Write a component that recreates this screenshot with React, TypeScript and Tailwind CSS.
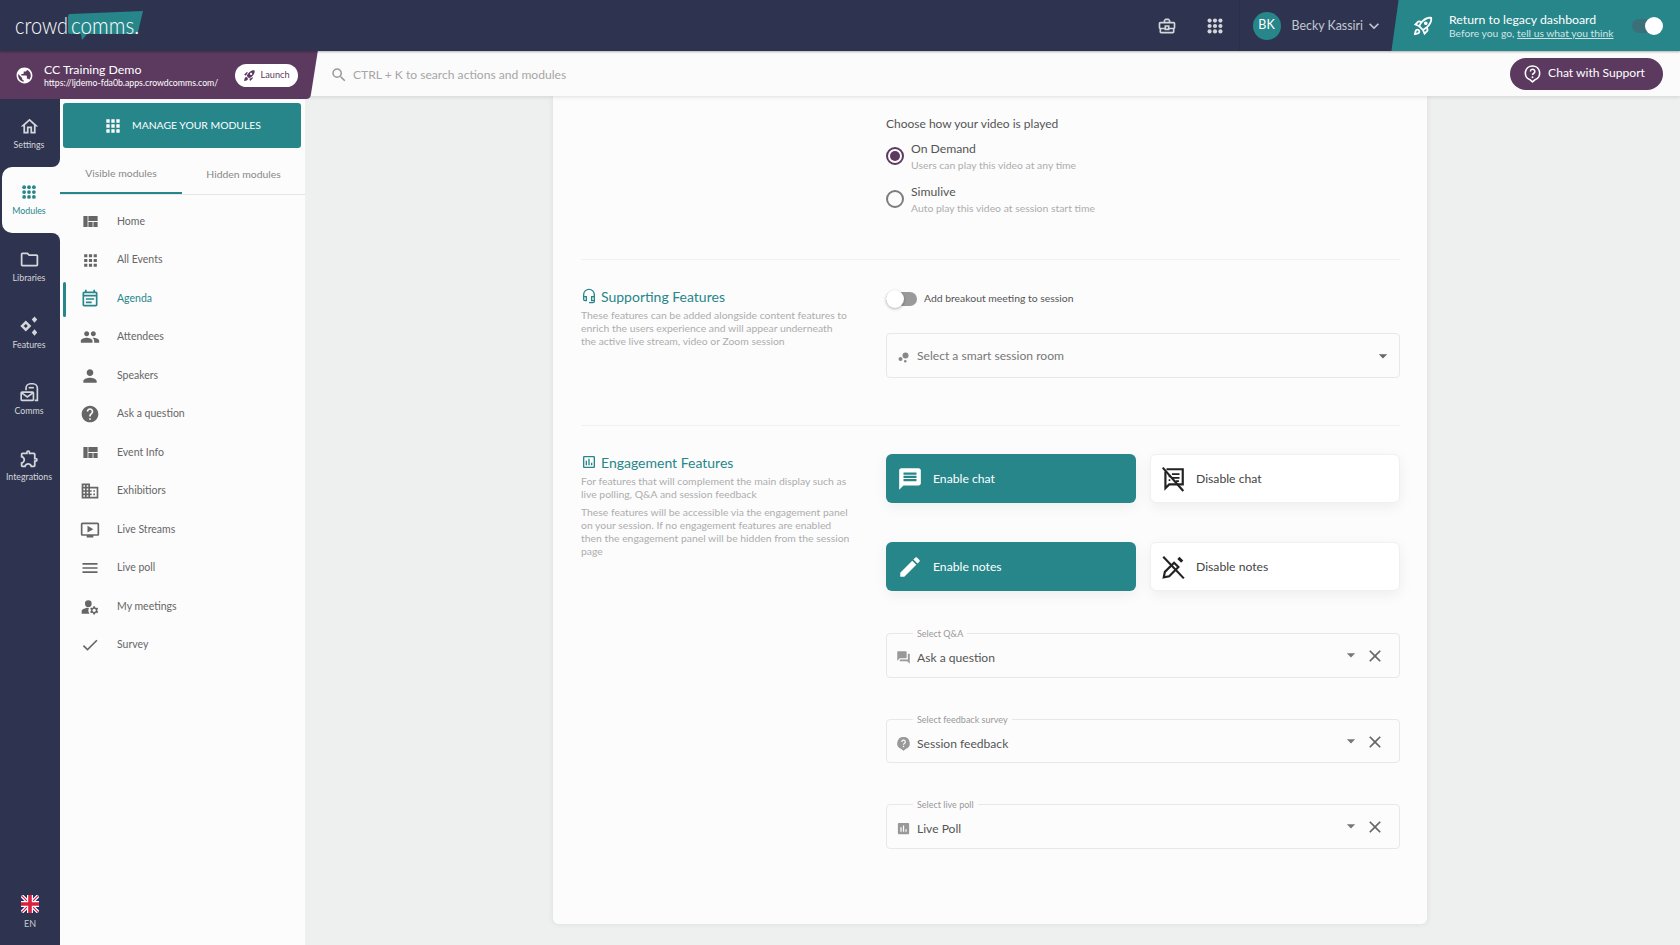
import React from "react";
import {
  MdOutlineHome, MdApps, MdOutlineFolder, MdOutlineExtension, MdViewQuilt, MdOutlineEventNote, MdPeople, MdPerson, MdHelp,
  MdOutlineDomain, MdOutlineOndemandVideo, MdMenu, MdManageAccounts, MdCheck, MdOutlineRocketLaunch, MdRocketLaunch, MdPublic, MdOutlineBusinessCenter,
  MdKeyboardArrowDown, MdSearch, MdOutlineHeadsetMic, MdOutlineAssessment, MdMessage, MdEdit,
  MdBubbleChart, MdForum, MdAssessment, MdClose, MdArrowDropDown,
} from "react-icons/md";

type IconT = React.ComponentType<{ size?: number; className?: string }>;

function DotGrid({ size = 20, className }: { size?: number; className?: string }) {
  const pos = [5.500, 12, 18.500];
  return (
    <svg width={size} height={size} viewBox="0 0 24 24" fill="currentColor" className={className}>
      {pos.map((y) => pos.map((x) => <circle key={`${x}-${y}`} cx={x} cy={y} r="2.500" />))}
    </svg>
  );
}

function Sparkles({ size = 21, className }: { size?: number; className?: string }) {
  return (
    <svg width={size} height={size} viewBox="0 0 24 24" fill="currentColor" fillRule="evenodd" className={className}>
      <path d="M8.500 6l6 6-6 6-6-6zM8.500 9.800L6.300 12l2.200 2.200 2.200-2.200z" />
      <path d="M18 1.500l3 3.500-3 3.500-3-3.500zM18 15.500l3 3.500-3 3.500-3-3.500z" />
    </svg>
  );
}

function CommsIcon({ size = 21, className }: { size?: number; className?: string }) {
  return (
    <svg width={size} height={size} viewBox="0 0 24 24" fill="none" stroke="currentColor" strokeWidth="1.900" className={className}>
      <path d="M8 9.500V7a5 5 0 0 1 5-5h3a5 5 0 0 1 5 5v14h-3" />
      <path d="M11 6.500h6" />
      <rect x="2.500" y="11.500" width="14" height="9.500" rx="1" />
      <path d="M3 12.500l6.500 4.500 6.500-4.500" />
    </svg>
  );
}

function HelpBubble({ size = 19, filled, className }: { size?: number; filled?: boolean; className?: string }) {
  return (
    <svg width={size} height={size} viewBox="0 0 24 24" fill="none" className={className}>
      <path
        d="M12 2.500a9 9 0 0 1 3 17.500l-3 2.500-3-2.500A9 9 0 0 1 12 2.500z"
        fill={filled ? "currentColor" : "none"}
        stroke="currentColor"
        strokeWidth="2"
        strokeLinejoin="round"
      />
      <path d="M9.300 9.500a2.800 2.800 0 1 1 4 2.500c-.9.500-1.300 1-1.300 2" stroke={filled ? "#fcfcfc" : "currentColor"} strokeWidth="1.900" />
      <circle cx="12" cy="16.700" r="1.200" fill={filled ? "#fcfcfc" : "currentColor"} />
    </svg>
  );
}

function FilledHelp({ size, className }: { size?: number; className?: string }) {
  return <HelpBubble size={size} className={className} filled />;
}

function ChatOff({ size = 26 }: { size?: number }) {
  return (
    <svg width={size} height={size} viewBox="0 0 24 24" fill="none" stroke="#222" strokeWidth="2">
      <path d="M5 5v15.500L8.500 17H21V3H6" />
      <path d="M11 7.500h7M11 11h7M14.500 14h3M8 9.500h1.500M8 13h1.500" strokeWidth="1.600" />
      <path d="M2.500 1.500L21.500 23" />
    </svg>
  );
}

function NotesOff({ size = 26 }: { size?: number }) {
  return (
    <svg width={size} height={size} viewBox="0 0 24 24" fill="#222">
      <path d="M3.500 21.500l1-5L13 8l4 4-8.500 8.500z" fill="none" stroke="#222" strokeWidth="2" />
      <path d="M16 4.500l2-2 3.500 3.500-2 2z" />
      <path d="M3 2.500L22 22.500" stroke="#222" strokeWidth="2" />
    </svg>
  );
}

const rail: { label: string; Icon: IconT; active?: boolean; size?: number }[] = [
  { label: "Settings", Icon: MdOutlineHome },
  { label: "Modules", Icon: DotGrid, active: true, size: 18 },
  { label: "Libraries", Icon: MdOutlineFolder },
  { label: "Features", Icon: Sparkles, size: 22 },
  { label: "Comms", Icon: CommsIcon },
  { label: "Integrations", Icon: MdOutlineExtension },
];

const modules: { label: string; Icon: IconT; active?: boolean; size?: number }[] = [
  { label: "Home", Icon: MdViewQuilt, size: 19 },
  { label: "All Events", Icon: MdApps, size: 19 },
  { label: "Agenda", Icon: MdOutlineEventNote, active: true },
  { label: "Attendees", Icon: MdPeople },
  { label: "Speakers", Icon: MdPerson },
  { label: "Ask a question", Icon: MdHelp },
  { label: "Event Info", Icon: MdViewQuilt, size: 19 },
  { label: "Exhibitiors", Icon: MdOutlineDomain },
  { label: "Live Streams", Icon: MdOutlineOndemandVideo },
  { label: "Live poll", Icon: MdMenu },
  { label: "My meetings", Icon: MdManageAccounts },
  { label: "Survey", Icon: MdCheck },
];

function Flag() {
  return (
    <svg width="18" height="18" viewBox="0 0 60 60">
      <defs>
        <clipPath id="flagc"><rect x="0" y="0" width="60" height="60" rx="8" /></clipPath>
      </defs>
      <g clipPath="url(#flagc)">
        <rect width="60" height="60" fill="#1f2f6e" />
        <path d="M0 0L60 60M60 0L0 60" stroke="#fff" strokeWidth="12" />
        <path d="M0 0L60 60M60 0L0 60" stroke="#d8213f" strokeWidth="4" />
        <path d="M30 0V60M0 30H60" stroke="#fff" strokeWidth="20" />
        <path d="M30 0V60M0 30H60" stroke="#d8213f" strokeWidth="12" />
      </g>
    </svg>
  );
}

function Logo() {
  return (
    <div className="relative ml-[15px] flex h-[28px] w-[130px] items-center text-[23.500px] font-light leading-none text-white">
      <svg className="absolute left-[53px] top-[-1px]" width="76" height="30" viewBox="0 0 76 30">
        <path d="M2 3 L75 0 L70 21 Q69.500 23 67 23 L19 23 L14 29 L13 23 L2 23 Q0 23 0 21 L0 5 Q0 3 2 3Z" fill="#26868a" />
      </svg>
      <span className="relative w-[52px] shrink-0 origin-left scale-x-[0.85]">crowd</span>
      <span className="relative ml-[4px] w-[59px] shrink-0 origin-left scale-x-[0.88]">comms</span>
      <span className="relative ml-[4px] shrink-0">.</span>
    </div>
  );
}

function Radio({ checked, title, sub }: { checked?: boolean; title: string; sub: string }) {
  return (
    <div className="flex items-center gap-[7px]">
      <span className={`flex h-[18px] w-[18px] items-center justify-center rounded-full border-2 ${checked ? "border-[#5c3a60]" : "border-[#7d7d7d]"}`}>
        {checked && <span className="h-[10px] w-[10px] rounded-full bg-[#5c3a60]" />}
      </span>
      <div>
        <div className="text-[12.200px] leading-[18px] text-[#555]">{title}</div>
        <div className="mt-px text-[10.400px] leading-[12px] text-[#adadad]">{sub}</div>
      </div>
    </div>
  );
}

function Heading({ Icon, text }: { Icon: IconT; text: string }) {
  return (
    <div className="-mt-[2px] flex h-[20px] items-center gap-[4px] text-[14px] text-[#26868a]">
      <Icon size={16} />
      <span>{text}</span>
    </div>
  );
}

function Choice({ on, Icon, text }: { on?: boolean; Icon: IconT; text: string }) {
  return (
    <div className={`flex h-[49px] items-center gap-[10px] rounded-[6px] text-[12.200px] shadow-[0_4px_14px_rgba(0,0,0,0.06)] ${on ? "bg-[#26868a] pl-[11px] text-white" : "border border-[#f0f0f0] bg-white pl-[9px] text-[#444]"}`}>
      <Icon size={26} />
      <span className="pt-px">{text}</span>
    </div>
  );
}

function Picker({ label, value, Icon }: { label: string; value: string; Icon: IconT }) {
  return (
    <div className="relative flex h-[44.500px] items-center rounded-[4px] border border-[#e8e8e8] pl-[9px] pr-[14px]">
      <span className="absolute left-[26px] top-[-6px] bg-[#fcfcfc] px-[4px] text-[9px] leading-[12px] text-[#999]">{label}</span>
      <Icon size={15} className="mt-[5px] text-[#999]" />
      <span className="ml-[6px] flex-1 pt-[6px] text-[12.100px] text-[#555]">{value}</span>
      <MdArrowDropDown size={20} className="text-[#777]" />
      <MdClose size={20} className="ml-[4px] mt-[2px] text-[#666]" />
    </div>
  );
}

export default function App() {
  return (
    <div className="flex h-screen w-full flex-col overflow-hidden bg-[#eef0ef] [font-family:Lato,sans-serif]">
      <header className="z-20 flex h-[51px] shrink-0 items-center bg-[#2e344f] text-white shadow-[0_1px_2px_rgba(0,0,0,0.3)]">
        <Logo />
        <div className="flex-1" />
        <MdOutlineBusinessCenter size={20} className="mr-[28px] text-[#d5d6dc]" />
        <DotGrid size={20} className="mr-[14px] text-[#d5d6dc]" />
        <div className="flex h-full items-center border-l border-[#2a2f49] pl-[13px]">
          <span className="flex h-[28px] w-[28px] items-center justify-center rounded-full bg-[#26868a] text-[12.500px]">BK</span>
          <span className="ml-[11px] pt-px text-[12.400px] text-[#c5c7d0]">Becky Kassiri</span>
          <MdKeyboardArrowDown size={20} className="ml-px text-[#c5c7d0]" />
        </div>
        <div className="relative ml-[14px] flex h-full w-[282px] shrink-0 items-center">
          <div className="absolute inset-y-0 left-[-3px] right-0 -skew-x-[8deg] bg-[#26868a]" />
          <div className="absolute inset-y-0 left-[20px] right-0 bg-[#26868a]" />
          <MdOutlineRocketLaunch size={22} className="relative ml-[14px] text-white" />
          <div className="relative ml-[15px] flex-1">
            <div className="text-[12.300px] leading-[15px] text-white">Return to legacy dashboard</div>
            <div className="text-[10.300px] leading-[13px] text-[#cfe5e5]">
              Before you go, <span className="underline">tell us what you think</span>
            </div>
          </div>
          <div className="relative mr-[18px] h-[14px] w-[30px] rounded-full bg-[#3b7078]">
            <span className="absolute right-[-1px] top-[-2px] h-[18px] w-[18px] rounded-full bg-white" />
          </div>
        </div>
      </header>

      <div className="z-10 flex h-[45px] shrink-0 items-center bg-[#fbfbfb] shadow-[0_1px_4px_rgba(0,0,0,0.12)]">
        <div className="relative flex h-[48px] w-[314px] shrink-0 items-center self-start">
          <div className="absolute inset-y-0 left-[-20px] right-0 -skew-x-[9deg] rounded-br-[4px] bg-[#5c3a60]" />
          <MdPublic size={19} className="relative ml-[15px] text-white" />
          <div className="relative ml-[10px] w-[173px] shrink-0 whitespace-nowrap text-white">
            <div className="text-[12.300px] leading-[15px]">CC Training Demo</div>
            <div className="text-[8.750px] leading-[11px]">https://ljdemo-fda0b.apps.crowdcomms.com/</div>
          </div>
          <div className="relative ml-[18px] flex h-[23px] w-[63px] shrink-0 items-center justify-center gap-[4px] rounded-full bg-white text-[9.200px] text-[#5c3a60]">
            <MdRocketLaunch size={13} />
            <span>Launch</span>
          </div>
        </div>
        <MdSearch size={18} className="ml-[16px] mt-[3px] text-[#999]" />
        <span className="ml-[5px] mt-[3px] flex-1 text-[12.100px] text-[#a6a6a6]">CTRL + K to search actions and modules</span>
        <div className="mr-[17px] flex h-[32px] w-[153px] items-center justify-center gap-[6px] rounded-full bg-[#5c3a60] pr-[5px] text-[12.100px] text-white">
          <HelpBubble size={19} />
          <span>Chat with Support</span>
        </div>
      </div>

      <div className="flex min-h-0 flex-1">
        <nav className="flex w-[60px] shrink-0 flex-col bg-[#2e344f]">
          <div className="h-[4px]" />
          {rail.map(({ label, Icon, active, size }) => (
            <div
              key={label}
              className={`relative ml-[2px] flex h-[66.500px] flex-col items-center justify-center pr-[4px] ${active ? "rounded-l-[10px] bg-[#fcfcfc] text-[#26868a]" : "text-[#d5d6dc]"}`}
            >
              {active && (
                <>
                  <span className="absolute right-0 top-[-8px] h-[8px] w-[8px] bg-[#fcfcfc]"><span className="block h-full w-full rounded-br-[8px] bg-[#2e344f]" /></span>
                  <span className="absolute bottom-[-8px] right-0 h-[8px] w-[8px] bg-[#fcfcfc]"><span className="block h-full w-full rounded-tr-[8px] bg-[#2e344f]" /></span>
                </>
              )}
              <Icon size={size ?? 21} />
              <span className={`${active ? "mt-[4px]" : "mt-[2px]"} whitespace-nowrap text-[8.800px] leading-[12px]`}>{label}</span>
            </div>
          ))}
          <div className="flex-1" />
          <div className="mb-[15px] flex flex-col items-center text-[#c8c9d0]">
            <Flag />
            <span className="mt-[5px] text-[9px] leading-[12px]">EN</span>
          </div>
        </nav>

        <aside className="flex w-[245px] shrink-0 flex-col bg-[#fcfcfc]">
          <div className="mx-[3px] mt-[7px] flex h-[45px] w-[238px] items-center justify-center gap-[9px] rounded-[3px] bg-[#26868a] text-[10.400px] text-white">
            <MdApps size={20} />
            <span className="pt-px">MANAGE YOUR MODULES</span>
          </div>
          <div className="mt-[7px] flex h-[40px] border-b border-[#e6e6e6] text-[10.400px] text-[#888]">
            <div className="flex w-[122px] items-center justify-center border-b-2 border-[#26868a] pt-px">Visible modules</div>
            <div className="flex w-[123px] items-center justify-center pt-px">Hidden modules</div>
          </div>
          <div className="relative pt-[7.500px]">
            {modules.map(({ label, Icon, active, size }) => (
              <div key={label} className={`relative flex h-[38.500px] items-center text-[10.500px] ${active ? "text-[#26868a]" : "text-[#666]"}`}>
                {active && <span className="absolute left-[3px] top-[2px] h-[35px] w-[3px] rounded-full bg-[#26868a]" />}
                <span className="flex w-[60px] justify-center">
                  <Icon size={size ?? 20} className={active ? "text-[#26868a]" : "text-[#666]"} />
                </span>
                <span className="-ml-[3px]">{label}</span>
              </div>
            ))}
          </div>
        </aside>

        <main className="min-w-0 flex-1 pb-[21px] pl-[248px]">
          <div className="h-full w-[874px] rounded-b-[6px] bg-[#fcfcfc] pl-[28px] pr-[27px] pt-[19px] shadow-[0_0_6px_rgba(0,0,0,0.08)]">
            <div className="border-b border-[#f1f1f1] pb-[45px] pl-[305px]">
              <div className="text-[12px] leading-[18px] text-[#555]">Choose how your video is played</div>
              <div className="mt-[7px] flex flex-col gap-[12px]">
                <Radio checked title="On Demand" sub="Users can play this video at any time" />
                <Radio title="Simulive" sub="Auto play this video at session start time" />
              </div>
            </div>

            <section className="grid grid-cols-[305px_1fr] border-b border-[#f1f1f1] pb-[47px] pt-[28px]">
              <div>
                <Heading Icon={MdOutlineHeadsetMic} text="Supporting Features" />
                <p className="mt-[3px] w-[268px] text-[10.400px] leading-[13px] text-[#adadad]">
                  These features can be added alongside content features to enrich the users experience and will appear underneath the active live stream, video or Zoom session
                </p>
              </div>
              <div>
                <div className="flex h-[22px] items-center gap-[7px]">
                  <span className="relative h-[14px] w-[31px] rounded-full bg-[#9a9a9a]">
                    <span className="absolute left-0 top-[-2px] h-[18px] w-[18px] rounded-full bg-white shadow-[0_1px_3px_rgba(0,0,0,0.3)]" />
                  </span>
                  <span className="text-[10.400px] text-[#555]">Add breakout meeting to session</span>
                </div>
                <div className="mt-[23px] flex h-[45px] items-center rounded-[4px] border border-[#e8e8e8] pl-[9px] pr-[6px]">
                  <MdBubbleChart size={15} className="mt-[3px] text-[#888]" />
                  <span className="ml-[6px] flex-1 pt-[2px] text-[12.100px] text-[#777]">Select a smart session room</span>
                  <MdArrowDropDown size={20} className="text-[#666]" />
                </div>
              </div>
            </section>

            <section className="grid grid-cols-[305px_1fr] pt-[28px]">
              <div>
                <Heading Icon={MdOutlineAssessment} text="Engagement Features" />
                <p className="mt-[3px] w-[271px] text-[10.400px] leading-[13px] text-[#adadad]">
                  For features that will complement the main display such as live polling, Q&amp;A and session feedback
                </p>
                <p className="mt-[5px] w-[271px] text-[10.400px] leading-[13px] text-[#adadad]">
                  These features will be accessible via the engagement panel on your session. If no engagement features are enabled then the engagement panel will be hidden from the session page
                </p>
              </div>
              <div>
                <div className="grid grid-cols-2 gap-x-[14px] gap-y-[39px]">
                  <Choice on Icon={MdMessage} text="Enable chat" />
                  <Choice Icon={ChatOff} text="Disable chat" />
                  <Choice on Icon={MdEdit} text="Enable notes" />
                  <Choice Icon={NotesOff} text="Disable notes" />
                </div>
                <div className="mt-[42px] flex flex-col gap-[41px]">
                  <Picker label="Select Q&A" value="Ask a question" Icon={MdForum} />
                  <Picker label="Select feedback survey" value="Session feedback" Icon={FilledHelp} />
                  <Picker label="Select live poll" value="Live Poll" Icon={MdAssessment} />
                </div>
              </div>
            </section>
          </div>
        </main>
      </div>
    </div>
  );
}
